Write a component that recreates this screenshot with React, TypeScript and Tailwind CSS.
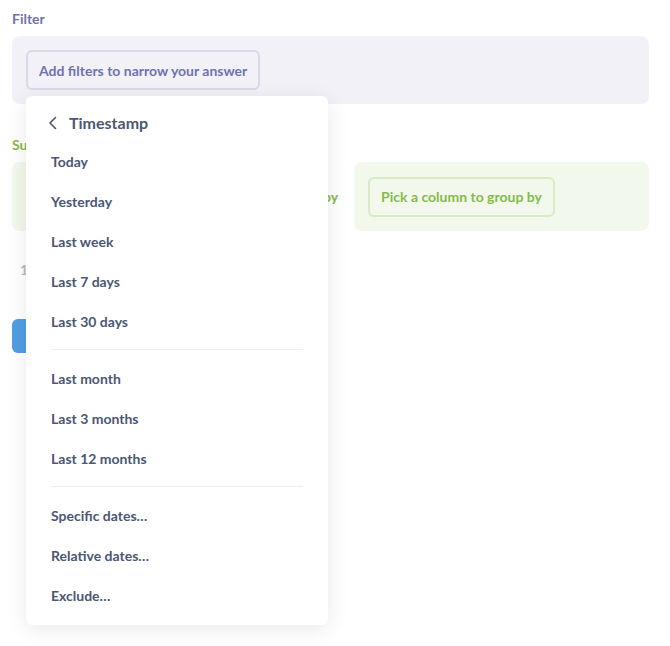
import { Fragment } from 'react'

const groups = [
  ['Today', 'Yesterday', 'Last week', 'Last 7 days', 'Last 30 days'],
  ['Last month', 'Last 3 months', 'Last 12 months'],
  ['Specific dates…', 'Relative dates…', 'Exclude…'],
]

const DatePopover = () => {
  return (
    <div className="absolute left-[26px] top-[96px] w-[302px] h-[529px] bg-white rounded-md shadow-[0_4px_22px_rgba(0,0,0,0.09)] pt-[16px]">
      {/* Header */}
      <div className="flex items-center pl-[22px] h-[22px] text-[#4C5773]">
        <svg width="10" height="14" viewBox="0 0 10 14" fill="none" className="mr-[11px]">
          <path d="M7.5 1.5L2 7l5.5 5.5" stroke="currentColor" strokeWidth="1.6" strokeLinecap="round" strokeLinejoin="round" />
        </svg>
        <span className="text-[16px] font-bold leading-[22px]">Timestamp</span>
      </div>

      <div className="mt-[7px]">
        {groups.map((items, gi) => (
          <Fragment key={gi}>
            {gi > 0 && <div className="mx-[25px] my-2 h-px bg-[#EDEFF2]" />}
            {items.map((label) => (
              <div
                key={label}
                className="h-10 flex items-center pl-[25px] text-[14px] font-bold text-[#4C5773]"
              >
                {label}
              </div>
            ))}
          </Fragment>
        ))}
      </div>
    </div>
  )
}

const App = () => {
  return (
    <div
      className="relative w-[670px] h-[646px] bg-white overflow-hidden pl-3 pr-[21px] pt-[10px]"
      style={{ fontFamily: 'Lato, "Noto Sans", sans-serif' }}
    >
      {/* Filter step */}
      <div className="text-[14px] font-bold text-[#7172AD] leading-[18px]">Filter</div>
      <div className="mt-[8px] h-[68px] rounded-lg bg-[#F1F1F7] px-[14px] flex items-center">
        <button className="h-10 px-[11px] rounded-md border-2 border-[#D9D9EA] text-[14px] font-bold text-[#7172AD]">
          Add filters to narrow your answer
        </button>
      </div>

      {/* Summarize step */}
      <div className="mt-[32px] text-[14px] font-bold text-[#84BB4C] leading-[18px]">Summarize</div>
      <div className="mt-[8px] flex items-center">
        <div className="flex-1 h-[69px] rounded-lg bg-[#F3F8ED] px-[14px] flex items-center">
          <button className="h-10 px-[11px] rounded-md border-2 border-[#D9EBC6] text-[14px] font-bold text-[#84BB4C]">
            Pick the metric you want to see
          </button>
        </div>
        <div className="mx-4 text-[14px] font-bold text-[#84BB4C]">by</div>
        <div className="flex-1 h-[69px] rounded-lg bg-[#F3F8ED] px-[14px] flex items-center">
          <button className="h-10 px-[11px] rounded-md border-2 border-[#D9EBC6] text-[14px] font-bold text-[#84BB4C]">
            Pick a column to group by
          </button>
        </div>
      </div>

      {/* Row limit */}
      <div className="mt-[30px] pl-2 text-[14px] font-bold text-[#B8BBC3] leading-[18px]">1</div>

      {/* Visualize */}
      <button className="mt-[40px] h-[34px] px-8 rounded-md bg-[#509EE3] text-white text-[14px] font-bold">
        Visualize
      </button>

      <DatePopover />
    </div>
  )
}

export default App
